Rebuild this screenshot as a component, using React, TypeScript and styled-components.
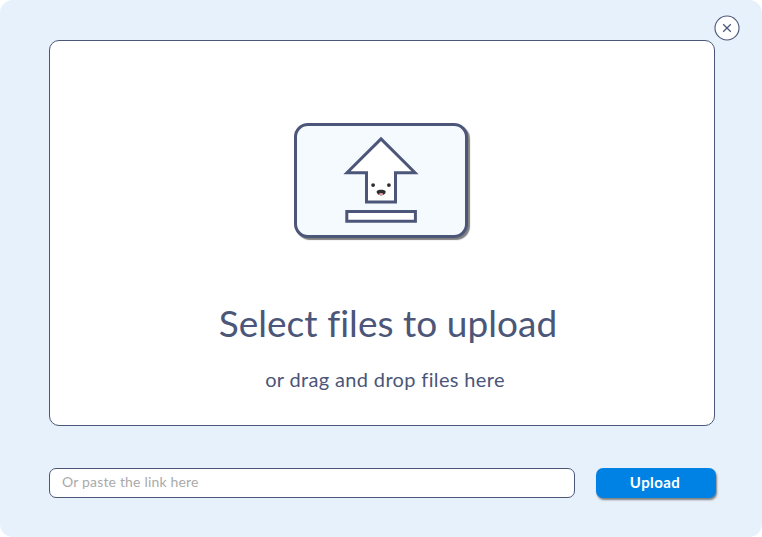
import React from "react";
import styled, { createGlobalStyle } from "styled-components";

const ink = "#4b5679";

const GlobalStyle = createGlobalStyle`
  * { box-sizing: border-box; }
  body {
    margin: 0;
    background: #fff;
    font-family: Lato, "Open Sans", sans-serif;
    font-variant-ligatures: none;
  }
`;

const Dialog = styled.main`
  position: relative;
  width: 762px;
  height: 537px;
  padding: 40px 46px 0 49px;
  border-radius: 13px;
  background: #e7f1fc;
  color: ${ink};
`;

const CloseButton = styled.button`
  position: absolute;
  top: 15px;
  right: 22px;
  width: 26px;
  height: 26px;
  padding: 0;
  border: 0;
  background: none;
  cursor: pointer;

  svg { display: block; }
`;

const DropZone = styled.section`
  display: flex;
  flex-direction: column;
  align-items: center;
  width: 666px;
  height: 386px;
  padding-top: 82px;
  border: 1px solid ${ink};
  border-radius: 10px;
  background: #fff;
`;

const Illustration = styled.div`
  width: 174px;
  height: 115px;
  margin-right: 2px;
  border: 3px solid ${ink};
  border-radius: 14px;
  background: #f5faff;
  box-shadow: 2px 2px 1px #808080;

  svg { display: block; }
`;

const Title = styled.h1`
  margin: 62px 0 0 12px;
  font-size: 37px;
  font-weight: 400;
  line-height: 46px;
  letter-spacing: 0.05px;
  white-space: nowrap;
`;

const Subtitle = styled.p`
  margin: 20px 0 0 6px;
  font-size: 20px;
  line-height: 26px;
  letter-spacing: 0.35px;
  white-space: nowrap;
`;

const LinkForm = styled.form`
  display: flex;
  gap: 21px;
  margin-top: 42px;
`;

const LinkInput = styled.input`
  width: 526px;
  height: 30px;
  padding: 0 12px 3px;
  border: 1px solid ${ink};
  border-radius: 7px;
  outline: none;
  background: #fff;
  color: ${ink};
  font-family: inherit;
  font-size: 14px;
  letter-spacing: 0.18px;

  &::placeholder { color: #aaa; opacity: 1; }
`;

const UploadButton = styled.button`
  width: 120px;
  height: 30px;
  padding: 0 2px 3px 0;
  border: 0;
  border-radius: 7px;
  background: #0082e5;
  box-shadow: 1px 2px 2px #808080;
  color: #fff;
  font-family: inherit;
  font-size: 15px;
  font-weight: 700;
  letter-spacing: 0.4px;
  cursor: pointer;
`;

const UploadArrow = () => (
  <svg width="168" height="109" viewBox="297 126 168 109" aria-hidden="true">
    <g fill="#fff" stroke={ink} strokeWidth="3" strokeMiterlimit="10">
      <path d="M381 138.9 415 172.8H395.5V202H366.5V172.8H347Z" />
      <path d="M346.8 211.5H415.4V221.3H346.8Z" />
    </g>
    <g fill="#302d32">
      <circle cx="373.1" cy="185.1" r="1.9" />
      <circle cx="388.9" cy="185.1" r="1.9" />
      <path d="M376.6 191.6C376.8 189.2 385.4 189.2 385.7 191.6C385.8 194 383.5 195.4 381.1 195.4S376.5 194 376.6 191.6Z" />
    </g>
    <path d="M378.8 194.5Q379.8 192.7 381.1 193.2Q382.5 192.7 383.4 194.5Q381.1 195.9 378.8 194.5Z" fill="#ed9ba5" />
  </svg>
);

export default function App() {
  return (
    <>
      <GlobalStyle />
      <Dialog>
        <CloseButton aria-label="Close">
          <svg width="26" height="26" viewBox="0 0 26 26" fill="none" stroke={ink}>
            <circle cx="13" cy="13" r="12" fill="#fff" strokeWidth="1.1" />
            <path d="M9.2 9.2 16.8 16.8M16.8 9.2 9.2 16.8" strokeWidth="1.25" />
          </svg>
        </CloseButton>
        <DropZone>
          <Illustration><UploadArrow /></Illustration>
          <Title>Select files to upload</Title>
          <Subtitle>or drag and drop files here</Subtitle>
        </DropZone>
        <LinkForm onSubmit={(event) => event.preventDefault()}>
          <LinkInput placeholder="Or paste the link here" />
          <UploadButton type="submit">Upload</UploadButton>
        </LinkForm>
      </Dialog>
    </>
  );
}
